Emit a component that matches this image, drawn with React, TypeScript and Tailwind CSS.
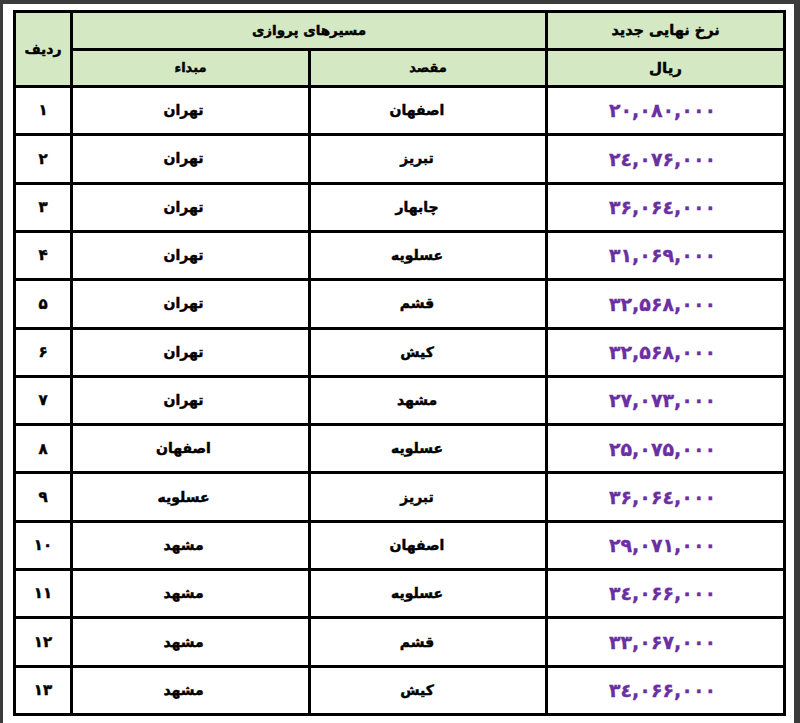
import React from "react";

const rows: [string, string, string, string][] = [
  ["۱", "تهران", "اصفهان", "۲۰,۰۸۰,۰۰۰"],
  ["۲", "تهران", "تبریز", "۲٤,۰۷۶,۰۰۰"],
  ["۳", "تهران", "چابهار", "۳۶,۰۶٤,۰۰۰"],
  ["۴", "تهران", "عسلویه", "۳۱,۰۶۹,۰۰۰"],
  ["۵", "تهران", "قشم", "۳۲,۵۶۸,۰۰۰"],
  ["۶", "تهران", "کیش", "۳۲,۵۶۸,۰۰۰"],
  ["۷", "تهران", "مشهد", "۲۷,۰۷۳,۰۰۰"],
  ["۸", "اصفهان", "عسلویه", "۲۵,۰۷۵,۰۰۰"],
  ["۹", "عسلویه", "تبریز", "۳۶,۰۶٤,۰۰۰"],
  ["۱۰", "مشهد", "اصفهان", "۲۹,۰۷۱,۰۰۰"],
  ["۱۱", "مشهد", "عسلویه", "۳٤,۰۶۶,۰۰۰"],
  ["۱۲", "مشهد", "قشم", "۳۳,۰۶۷,۰۰۰"],
  ["۱۳", "مشهد", "کیش", "۳٤,۰۶۶,۰۰۰"],
];

const font = { fontFamily: '"DejaVu Sans", sans-serif' };

export default function App() {
  return (
    <div className="w-[800px] h-[723px] bg-[#3b3b3b] pt-[4px] pl-[3px] pr-[6px] overflow-hidden" style={font}>
      <div className="w-full h-full bg-white pt-[6px] pl-[10px]">
        <div className="grid w-[773px] h-[706px] bg-black p-[3px] gap-[3px] grid-cols-[54px_235px_234px_235px] grid-rows-[35px_34px_repeat(13,1fr)] text-black font-bold [-webkit-text-stroke:0.45px_black]">
          <div className="row-span-2 bg-[#d3e8c3] flex items-center justify-center text-[14px]" dir="rtl">ردیف</div>
          <div className="col-span-2 bg-[#d3e8c3] flex items-center justify-center text-[13.5px]" dir="rtl">مسیرهای پروازی</div>
          <div className="bg-[#d3e8c3] flex items-center justify-center text-[14.5px]" dir="rtl">نرخ نهایی جدید</div>
          <div className="bg-[#d3e8c3] flex items-center justify-center text-[13px]" dir="rtl">مبداء</div>
          <div className="bg-[#d3e8c3] flex items-center justify-center text-[13px]" dir="rtl">مقصد</div>
          <div className="bg-[#d3e8c3] flex items-center justify-center text-[15px]" dir="rtl">ریال</div>
          {rows.map(([n, from, to, price], i) => (
            <React.Fragment key={i}>
              <div className="bg-white flex items-center justify-center text-[15px]">{n}</div>
              <div className="bg-white flex items-center justify-center pr-[14px] text-[14px]" dir="ltr">
                <span dir="rtl">{from}</span>
              </div>
              <div className="bg-white flex items-center justify-center pr-[22px] text-[14px]" dir="ltr">
                <span dir="rtl">{to}</span>
              </div>
              <div className="bg-white flex items-center justify-center pr-[6px] text-[19px] tracking-[-0.6px] text-[#6b2fa3] [-webkit-text-stroke:0.3px_#6b2fa3]" dir="ltr">{price}</div>
            </React.Fragment>
          ))}
        </div>
      </div>
    </div>
  );
}
